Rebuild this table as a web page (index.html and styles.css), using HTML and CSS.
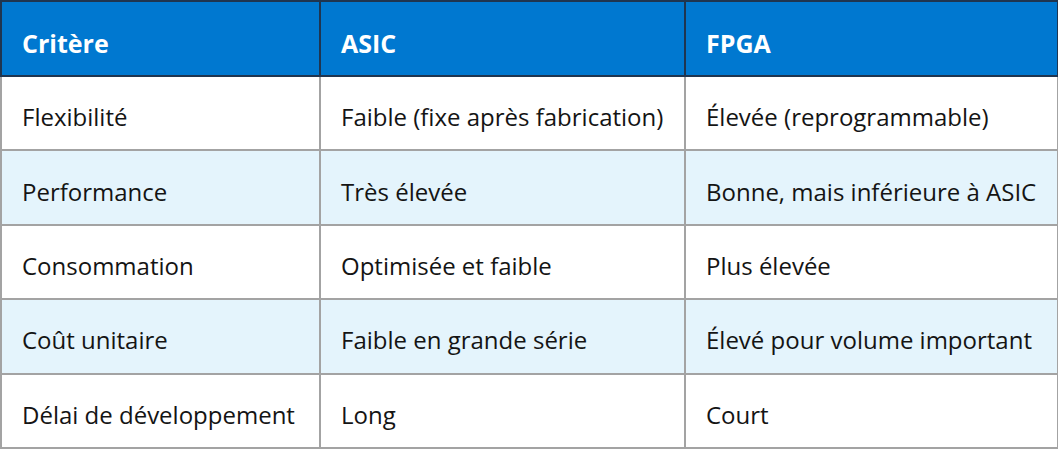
FILE: index.html
```html
<!DOCTYPE html>
<html lang="fr">
<head>
<meta charset="utf-8">
<link rel="stylesheet" href="styles.css">
</head>
<body>
<table class="cmp">
  <colgroup>
    <col class="c1"><col class="c2"><col class="c3">
  </colgroup>
  <thead>
    <tr><th>Critère</th><th>ASIC</th><th>FPGA</th></tr>
  </thead>
  <tbody>
    <tr><td>Flexibilité</td><td>Faible (fixe après fabrication)</td><td>Élevée (reprogrammable)</td></tr>
    <tr class="alt"><td>Performance</td><td>Très élevée</td><td>Bonne, mais inférieure à ASIC</td></tr>
    <tr><td>Consommation</td><td>Optimisée et faible</td><td>Plus élevée</td></tr>
    <tr class="alt"><td>Coût unitaire</td><td>Faible en grande série</td><td>Élevé pour volume important</td></tr>
    <tr><td>Délai de développement</td><td>Long</td><td>Court</td></tr>
  </tbody>
</table>
</body>
</html>
```
FILE: styles.css
```css
html, body {
  margin: 0;
  padding: 0;
  background: #ffffff;
}
.cmp {
  border-collapse: collapse;
  width: 1057px;
  table-layout: fixed;
  font-family: "Open Sans", "Noto Sans", sans-serif;
  font-size: 24px;
  line-height: 32px;
  color: #141414;
}
.c1 { width: 319px; }
.c2 { width: 365px; }
.c3 { width: 373px; }
.cmp th {
  background: #0078d0;
  color: #ffffff;
  font-weight: 700;
  text-align: left;
  height: 65px;
  padding: 8px 20px 0;
  border: 2px solid #1f3550;
  font-size: 25px;
}
.cmp td {
  height: 64.4px;
  padding: 8px 20px 0;
  border: 2px solid #a3a3a3;
  white-space: nowrap;
}
.cmp tr.alt td {
  background: #e4f4fc;
}
```
